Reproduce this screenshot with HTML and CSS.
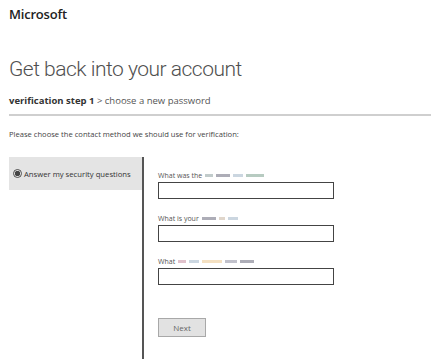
FILE: index.html
```html
<!DOCTYPE html>
<html lang="en">
  <head>
    <meta charset="UTF-8" />
    <meta name="viewport" content="width=device-width, initial-scale=1.0" />
    <title>Get back into your account</title>
    <link rel="stylesheet" href="styles.css">
  </head>
  <body>
    <div class="page">
      <div class="logo">Microsoft</div>
      <h1>Get back into your account</h1>

      <div class="steps">
        <b>verification step 1</b> &gt; choose a new password
      </div>

      <p class="intro">Please choose the contact method we should use for verification:</p>

      <div class="verify">
        <div class="methods">
          <label class="method">
            <input type="radio" name="method" checked />
            Answer my security questions
          </label>
        </div>

        <form class="questions">
          <label class="question">
            <span>What was the <i class="blur b1"></i><i class="blur b2"></i><i class="blur b3"></i><i class="blur b4"></i></span>
            <input type="text" />
          </label>

          <label class="question">
            <span>What is your <i class="blur b2"></i><i class="blur b5"></i><i class="blur b3"></i></span>
            <input type="text" />
          </label>

          <label class="question">
            <span>What <i class="blur b6"></i><i class="blur b3"></i><i class="blur b7"></i><i class="blur b8"></i><i class="blur b2"></i></span>
            <input type="text" />
          </label>

          <button type="button" class="next">Next</button>
        </form>
      </div>
    </div>
  </body>
</html>
```

FILE: styles.css
```css
body {
  margin: 0;
  padding: 0;
  font-family: "Open Sans", "Noto Sans", sans-serif;
  background: white;
  color: #333;
}

.page {
  padding: 5px 10px 0 9px;
}

.logo {
  font-size: 13px;
  font-weight: 600;
  color: #222;
  letter-spacing: -0.2px;
  line-height: 18px;
}

h1 {
  margin: 30px 0 0;
  font-family: Roboto, "Open Sans", sans-serif;
  font-size: 21px;
  font-weight: 300;
  color: #505050;
  line-height: 32px;
  letter-spacing: -0.5px;
}

.steps {
  margin-top: 9px;
  padding-bottom: 6px;
  border-bottom: 2px solid #cfcfcf;
  font-size: 9.5px;
  line-height: 14px;
  color: #555;
}

.steps b {
  color: #333;
}

.intro {
  margin: 12px 0 0;
  font-size: 7.6px;
  line-height: 12px;
  color: #444;
}

.verify {
  display: flex;
  margin-top: 17px;
}

.methods {
  width: 133px;
  height: 202px;
  border-right: 2px solid #555;
}

.method {
  display: flex;
  align-items: center;
  gap: 2px;
  height: 33px;
  padding-left: 4px;
  background: #e4e4e4;
  font-size: 7.7px;
  color: #333;
}

.method input {
  margin: 0;
  width: 9px;
  height: 9px;
  accent-color: #444;
}

.questions {
  display: flex;
  flex-direction: column;
  align-items: flex-start;
  padding: 13px 0 0 14px;
}

.question {
  display: flex;
  flex-direction: column;
  margin-bottom: 14px;
}

.question span {
  display: flex;
  align-items: center;
  gap: 3px;
  height: 11px;
  font-size: 7px;
  color: #555;
}

.question input {
  width: 176px;
  height: 17px;
  margin-top: 1px;
  padding: 0;
  border: 1px solid #444;
  box-sizing: border-box;
}

.blur {
  display: inline-block;
  height: 3px;
  opacity: 0.6;
  filter: blur(0.6px);
}

.b1 { width: 8px; background: #9aa; }
.b2 { width: 14px; background: #778; }
.b3 { width: 10px; background: #abc; }
.b4 { width: 18px; background: #8a9; }
.b5 { width: 6px; background: #cba; }
.b6 { width: 8px; background: #c9a; }
.b7 { width: 20px; background: #ec9; }
.b8 { width: 12px; background: #99a; }

.next {
  margin-top: 19px;
  width: 48px;
  height: 19px;
  padding: 0;
  border: 1px solid #a8a8a8;
  background-color: #e2e2e2;
  font-family: inherit;
  font-size: 8px;
  color: #666;
}
```
